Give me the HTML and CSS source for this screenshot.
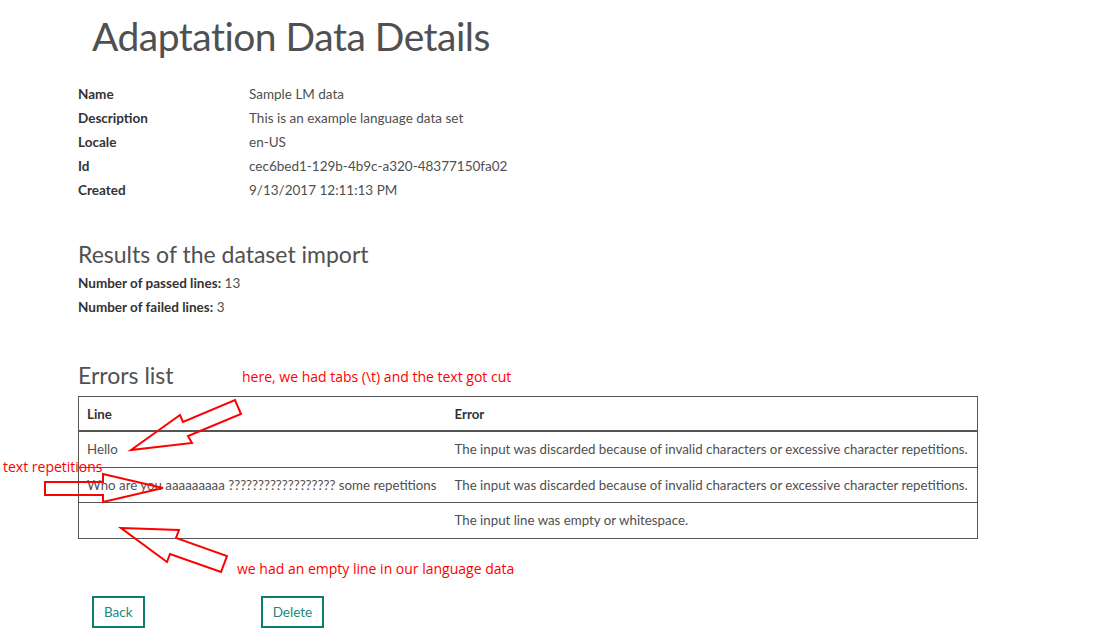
FILE: index.html
```html
<!DOCTYPE html>
<html lang="en">
<head>
<meta charset="utf-8">
<title>Adaptation Data Details</title>
<link rel="stylesheet" href="styles.css">
</head>
<body>
<div class="page">
  <h1 class="title">Adaptation Data Details</h1>

  <dl class="details">
    <dt>Name</dt><dd>Sample LM data</dd>
    <dt>Description</dt><dd>This is an example language data set</dd>
    <dt>Locale</dt><dd>en-US</dd>
    <dt>Id</dt><dd>cec6bed1-129b-4b9c-a320-48377150fa02</dd>
    <dt>Created</dt><dd>9/13/2017 12:11:13 PM</dd>
  </dl>

  <h2 class="section results">Results of the dataset import</h2>
  <p class="stat"><b>Number of passed lines:</b> 13</p>
  <p class="stat"><b>Number of failed lines:</b> 3</p>

  <h2 class="section errors">Errors list</h2>
  <table class="errtable">
    <colgroup><col class="col-line"><col></colgroup>
    <thead>
      <tr><th>Line</th><th>Error</th></tr>
    </thead>
    <tbody>
      <tr><td>Hello</td><td>The input was discarded because of invalid characters or excessive character repetitions.</td></tr>
      <tr><td>Who are you aaaaaaaaa ?????????????????? some repetitions</td><td>The input was discarded because of invalid characters or excessive character repetitions.</td></tr>
      <tr><td></td><td>The input line was empty or whitespace.</td></tr>
    </tbody>
  </table>

  <div class="actions">
    <button class="btn btn-back">Back</button>
    <button class="btn btn-delete">Delete</button>
  </div>
</div>

<div class="annot">
  <svg class="arrows" width="1107" height="639" viewBox="0 0 1107 639">
    <polygon points="131,450 180,415 183,422 235,400 241,414 188,436 192,443" />
    <polygon points="45,482 103,482 103,474 163,488 103,502 103,495 45,495" />
    <polygon points="121,528 179,530 176,538 227,556 221,572 170,554 167,562" />
  </svg>
  <span class="note note-tabs">here, we had tabs (\t) and the text got cut</span>
  <span class="note note-rep">text repetitions</span>
  <span class="note note-empty">we had an empty line in our language data</span>
</div>
</body>
</html>
```

FILE: styles.css
```css
html, body {
  margin: 0;
  padding: 0;
  background: #fff;
}

body {
  font-family: Lato, "Open Sans", "Liberation Sans", sans-serif;
  font-size: 13.5px;
  line-height: 20px;
  color: #4f4f4f;
  position: relative;
  width: 1107px;
  height: 639px;
  overflow: hidden;
}

.page {
  padding: 0 0 0 78px;
  width: 900px;
}

.title {
  margin: 10px 0 0 14px;
  font-size: 39px;
  letter-spacing: -0.5px;
  line-height: 52px;
  font-weight: 400;
  color: #505050;
}

.details {
  display: grid;
  grid-template-columns: 171px auto;
  grid-auto-rows: 24px;
  margin: 20px 0 0 0;
  align-items: center;
}

.details dt {
  font-weight: 700;
  color: #333;
}

.details dd {
  margin: 0;
}

.section {
  font-size: 23px;
  font-weight: 400;
  line-height: 30px;
  color: #505050;
  margin: 0;
}

.results {
  margin-top: 37px;
  margin-bottom: 2px;
}

.stat {
  margin: 0;
  line-height: 24px;
}

.stat b {
  color: #333;
}

.errors {
  margin-top: 41px;
  margin-bottom: 6px;
}

.errtable {
  border-collapse: collapse;
  table-layout: fixed;
  width: 900px;
  border: 1px solid #555;
  font-size: 13.3px;
}

.col-line {
  width: 368px;
}

.errtable th {
  text-align: left;
  font-weight: 700;
  color: #333;
  height: 33px;
  padding: 0 8px;
  border-bottom: 2px solid #555;
}

.errtable td {
  height: 34.5px;
  padding: 0 8px;
  border-top: 1px solid #555;
  white-space: nowrap;
  overflow: hidden;
}

.actions {
  display: flex;
  gap: 116px;
  margin: 57px 0 0 14px;
}

.btn {
  font-family: inherit;
  font-size: 13.5px;
  color: #1b8a7c;
  background: #fff;
  border: 2px solid #0e7d6e;
  padding: 0 10px;
  height: 32px;
  border-radius: 0;
}

.annot {
  position: absolute;
  left: 0;
  top: 0;
  width: 1107px;
  height: 639px;
  pointer-events: none;
}

.arrows {
  position: absolute;
  left: 0;
  top: 0;
}

.arrows polygon {
  fill: none;
  stroke: #f00;
  stroke-width: 2;
  stroke-linejoin: miter;
}

.note {
  position: absolute;
  font-family: "Open Sans", "Noto Sans", sans-serif;
  color: #f00;
  font-size: 14px;
  line-height: 18px;
  white-space: nowrap;
}

.note-tabs {
  left: 242px;
  top: 368px;
}

.note-rep {
  left: 3px;
  top: 458px;
}

.note-empty {
  left: 237px;
  top: 560px;
}
```
